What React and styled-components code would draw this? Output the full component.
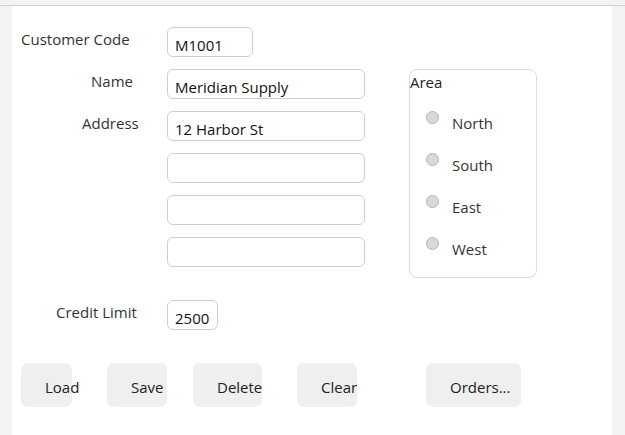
import React from 'react';
import styled, { createGlobalStyle } from 'styled-components';

const GlobalStyle = createGlobalStyle`
  html, body, #root {
    height: 100%;
  }
  body {
    margin: 0;
    background: #f3f3f3;
    font-family: "Open Sans", "Noto Sans", sans-serif;
  }
`;

const Page = styled.div`
  display: flex;
  flex-direction: column;
  height: 100vh;
`;

const TopStrip = styled.div`
  height: 5px;
  border-bottom: 1px solid #cfcfcf;
  flex-shrink: 0;
`;

const Panel = styled.div`
  flex: 1;
  margin: 0 13px 0 12px;
  background: #ffffff;
  padding: 21px 0 0 9px;
`;

const TopSection = styled.div`
  display: flex;
  align-items: flex-start;
`;

const FieldGrid = styled.div`
  display: grid;
  grid-template-columns: 146px auto;
  row-gap: 12px;
  align-items: start;
`;

const Label = styled.div`
  padding: 2px 0 0 ${p => p.$indent || 0}px;
  font-size: 15px;
  line-height: 20px;
  color: #333;
  white-space: nowrap;
`;

const TextBox = styled.input`
  box-sizing: border-box;
  width: ${p => p.$w}px;
  height: 30px;
  margin: 0;
  padding: 6px 4px 0 7px;
  border: 1px solid #cfcfcf;
  border-radius: 6px;
  font-family: inherit;
  font-size: 15px;
  line-height: 20px;
  color: #111;
  background: #fff;
  outline: none;
`;

const GroupBox = styled.div`
  box-sizing: border-box;
  width: 128px;
  height: 209px;
  margin: 42px 0 0 44px;
  padding-top: 2px;
  border: 1px solid #dcdcdc;
  border-radius: 8px;
`;

const GroupTitle = styled.div`
  font-size: 15px;
  line-height: 20px;
  color: #222;
  margin-bottom: 19px;
`;

const RadioRow = styled.label`
  display: flex;
  align-items: flex-start;
  height: 42px;
  padding-left: 16px;
`;

const Radio = styled.input`
  appearance: none;
  box-sizing: border-box;
  width: 13px;
  height: 13px;
  margin: 0;
  border-radius: 50%;
  border: 1px solid #b4b4b4;
  background: #d9d9d9;
`;

const RadioText = styled.span`
  margin: 2px 0 0 13px;
  font-size: 15px;
  line-height: 20px;
  color: #333;
`;

const CreditRow = styled(FieldGrid)`
  margin-top: 22px;
`;

const ButtonRow = styled.div`
  display: flex;
  margin-top: 33px;
`;

const Button = styled.button`
  box-sizing: border-box;
  width: ${p => p.$w}px;
  height: 44px;
  margin: 0 0 0 ${p => p.$ml || 0}px;
  padding: 3px 0 0 24px;
  border: none;
  border-radius: 7px;
  background: #efefef;
  font-family: inherit;
  font-size: 15px;
  line-height: 20px;
  color: #222;
  text-align: left;
  white-space: nowrap;
  overflow: visible;
`;

const areas = ['North', 'South', 'East', 'West'];

export default function App() {
  return (
    <Page>
      <GlobalStyle />
      <TopStrip />
      <Panel>
        <TopSection>
          <FieldGrid>
            <Label>Customer Code</Label>
            <TextBox $w={86} defaultValue="M1001" />
            <Label $indent={70}>Name</Label>
            <TextBox $w={198} defaultValue="Meridian Supply" />
            <Label $indent={61}>Address</Label>
            <TextBox $w={198} defaultValue="12 Harbor St" />
            <span />
            <TextBox $w={198} />
            <span />
            <TextBox $w={198} />
            <span />
            <TextBox $w={198} />
          </FieldGrid>
          <GroupBox>
            <GroupTitle>Area</GroupTitle>
            {areas.map(a => (
              <RadioRow key={a}>
                <Radio type="radio" name="area" />
                <RadioText>{a}</RadioText>
              </RadioRow>
            ))}
          </GroupBox>
        </TopSection>
        <CreditRow>
          <Label $indent={35}>Credit Limit</Label>
          <TextBox $w={51} defaultValue="2500" />
        </CreditRow>
        <ButtonRow>
          <Button $w={51}>Load</Button>
          <Button $w={60} $ml={35}>Save</Button>
          <Button $w={69} $ml={26}>Delete</Button>
          <Button $w={60} $ml={35}>Clear</Button>
          <Button $w={95} $ml={69}>Orders...</Button>
        </ButtonRow>
      </Panel>
    </Page>
  );
}
